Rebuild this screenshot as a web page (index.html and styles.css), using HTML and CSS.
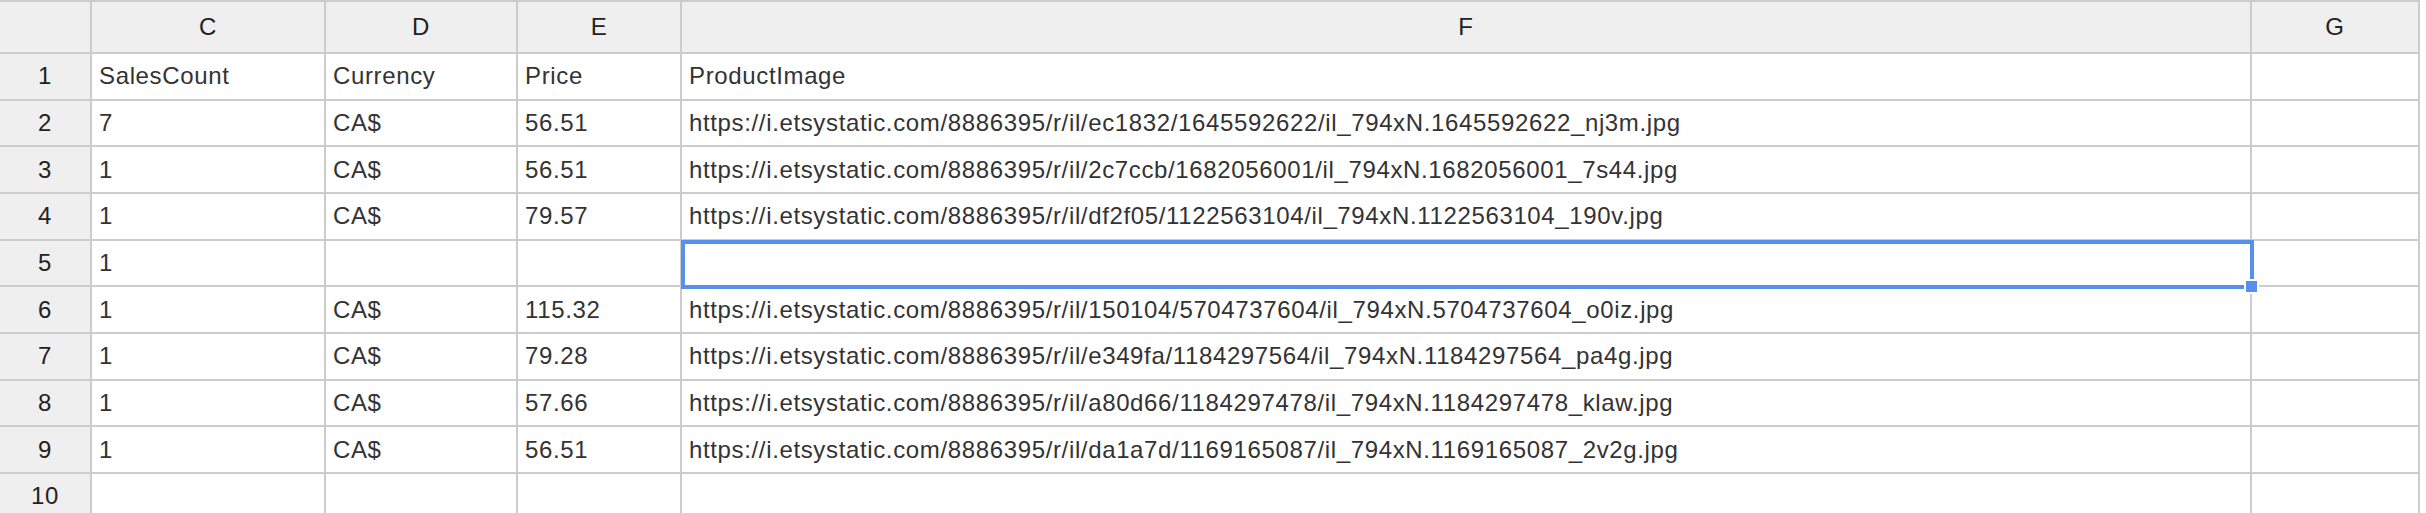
FILE: index.html
```html
<!DOCTYPE html>
<html lang="en">
<head>
    <meta charset="UTF-8">
    <title>Sheet</title>
    <link rel="stylesheet" href="styles.css">
</head>
<body>

<div class="sheet">
    <div class="corner"></div>
    <div class="col-head">C</div>
    <div class="col-head">D</div>
    <div class="col-head">E</div>
    <div class="col-head">F</div>
    <div class="col-head">G</div>

    <div class="row-head">1</div>
    <div class="cell">SalesCount</div>
    <div class="cell">Currency</div>
    <div class="cell">Price</div>
    <div class="cell">ProductImage</div>
    <div class="cell"></div>

    <div class="row-head">2</div>
    <div class="cell">7</div>
    <div class="cell">CA$</div>
    <div class="cell">56.51</div>
    <div class="cell">https://i.etsystatic.com/8886395/r/il/ec1832/1645592622/il_794xN.1645592622_nj3m.jpg</div>
    <div class="cell"></div>

    <div class="row-head">3</div>
    <div class="cell">1</div>
    <div class="cell">CA$</div>
    <div class="cell">56.51</div>
    <div class="cell">https://i.etsystatic.com/8886395/r/il/2c7ccb/1682056001/il_794xN.1682056001_7s44.jpg</div>
    <div class="cell"></div>

    <div class="row-head">4</div>
    <div class="cell">1</div>
    <div class="cell">CA$</div>
    <div class="cell">79.57</div>
    <div class="cell">https://i.etsystatic.com/8886395/r/il/df2f05/1122563104/il_794xN.1122563104_190v.jpg</div>
    <div class="cell"></div>

    <div class="row-head">5</div>
    <div class="cell">1</div>
    <div class="cell"></div>
    <div class="cell"></div>
    <div class="cell selected"><span class="handle"></span></div>
    <div class="cell"></div>

    <div class="row-head">6</div>
    <div class="cell">1</div>
    <div class="cell">CA$</div>
    <div class="cell">115.32</div>
    <div class="cell">https://i.etsystatic.com/8886395/r/il/150104/5704737604/il_794xN.5704737604_o0iz.jpg</div>
    <div class="cell"></div>

    <div class="row-head">7</div>
    <div class="cell">1</div>
    <div class="cell">CA$</div>
    <div class="cell">79.28</div>
    <div class="cell">https://i.etsystatic.com/8886395/r/il/e349fa/1184297564/il_794xN.1184297564_pa4g.jpg</div>
    <div class="cell"></div>

    <div class="row-head">8</div>
    <div class="cell">1</div>
    <div class="cell">CA$</div>
    <div class="cell">57.66</div>
    <div class="cell">https://i.etsystatic.com/8886395/r/il/a80d66/1184297478/il_794xN.1184297478_klaw.jpg</div>
    <div class="cell"></div>

    <div class="row-head">9</div>
    <div class="cell">1</div>
    <div class="cell">CA$</div>
    <div class="cell">56.51</div>
    <div class="cell">https://i.etsystatic.com/8886395/r/il/da1a7d/1169165087/il_794xN.1169165087_2v2g.jpg</div>
    <div class="cell"></div>

    <div class="row-head">10</div>
    <div class="cell"></div>
    <div class="cell"></div>
    <div class="cell"></div>
    <div class="cell"></div>
    <div class="cell"></div>
</div>

</body>
</html>
```

FILE: styles.css
```css
body {
    margin: 0;
    padding: 0;
    background-color: #fff;
    font-family: 'Liberation Sans', Arial, sans-serif;
    font-size: 24px;
    letter-spacing: 0.64px;
    color: #333;
    overflow: hidden;
}

.sheet {
    display: grid;
    grid-template-columns: 90px 232px 190px 162px 1568px 166px;
    grid-template-rows: 50px;
    grid-auto-rows: 44.67px;
    gap: 2px;
    width: max-content;
    background-color: #cccccc;
    border-top: 2px solid #cccccc;
    border-right: 2px solid #cccccc;
}

.corner,
.col-head,
.row-head {
    background-color: #efefef;
    color: #222;
    display: flex;
    align-items: center;
    justify-content: center;
}

.cell {
    background-color: #fff;
    display: flex;
    align-items: center;
    padding: 0 7px;
    white-space: nowrap;
    overflow: visible;
}

/* Active cell outline */
.selected {
    position: relative;
}

.selected::after {
    content: '';
    position: absolute;
    top: -1px;
    left: -1px;
    right: -4px;
    bottom: -4px;
    border: 4px solid #5590ee;
}

.handle {
    position: absolute;
    right: -9px;
    bottom: -9px;
    width: 11px;
    height: 11px;
    background-color: #5590ee;
    border: 2px solid #fff;
    z-index: 1;
}
```
